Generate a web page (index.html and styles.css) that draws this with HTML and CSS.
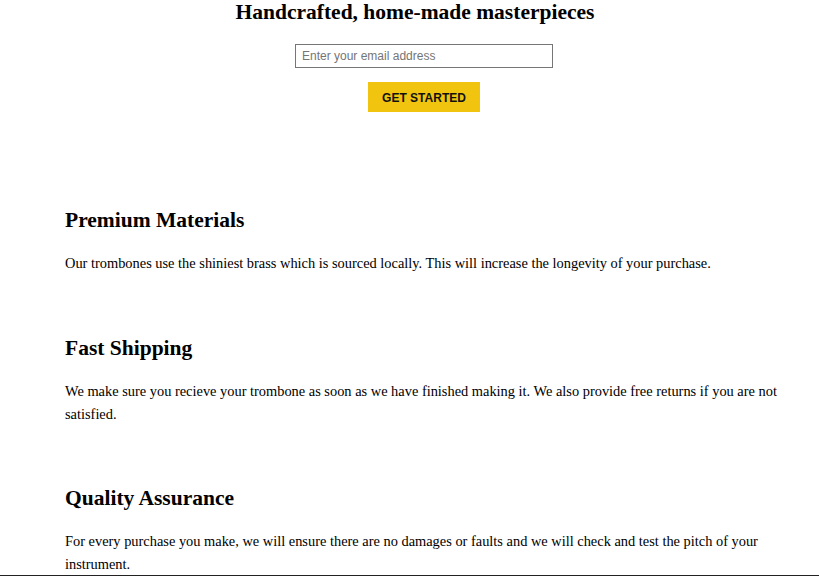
FILE: index.html
```html
<!DOCTYPE html>
<html lang="en">
<head>
<meta charset="utf-8">
<title>Trombones</title>
<link rel="stylesheet" href="styles.css">
</head>
<body>
<section class="hero">
  <h2 class="hero-title">Handcrafted, home-made masterpieces</h2>
  <form class="signup">
    <input class="email" type="email" placeholder="Enter your email address">
    <button class="cta" type="button">GET STARTED</button>
  </form>
</section>
<section class="features">
  <div class="feature">
    <h2 class="feature-title">Premium Materials</h2>
    <p class="feature-text">Our trombones use the shiniest brass which is sourced locally. This will increase the longevity of your purchase.</p>
  </div>
  <div class="feature">
    <h2 class="feature-title">Fast Shipping</h2>
    <p class="feature-text">We make sure you recieve your trombone as soon as we have finished making it. We also provide free returns if you are not satisfied.</p>
  </div>
  <div class="feature">
    <h2 class="feature-title">Quality Assurance</h2>
    <p class="feature-text">For every purchase you make, we will ensure there are no damages or faults and we will check and test the pitch of your instrument.</p>
  </div>
</section>
<div class="edge"></div>
</body>
</html>
```
FILE: styles.css
```css
html, body {
  margin: 0;
  padding: 0;
  background: #fff;
}
body {
  font-family: "Liberation Serif", "Times New Roman", serif;
  color: #000;
}
.hero {
  display: flex;
  flex-direction: column;
  align-items: center;
  padding-left: 11px;
}
.hero-title {
  margin: 0;
  font-size: 21.5px;
  line-height: 24px;
  font-weight: bold;
}
.signup {
  display: flex;
  flex-direction: column;
  align-items: center;
  margin-top: 20px;
  margin-left: 18px;
}
.email {
  width: 258px;
  height: 24px;
  box-sizing: border-box;
  border: 1px solid #767676;
  padding: 1px 6px;
  font-family: "Liberation Sans", Arial, sans-serif;
  font-size: 12px;
  color: #000;
  outline: none;
}
.email::placeholder {
  color: #757575;
}
.cta {
  margin-top: 14px;
  width: 112px;
  height: 30px;
  border: none;
  background: #f1c40f;
  font-family: "Liberation Sans", Arial, sans-serif;
  font-size: 12px;
  font-weight: bold;
  color: #111;
  padding: 2px 0 0;
}
.features {
  display: flex;
  flex-direction: column;
  padding: 0 30px 0 65px;
  margin-top: 93px;
}
.feature-title {
  margin: 0;
  font-size: 21.5px;
  line-height: 30px;
}
.feature-text {
  margin: 17px 0 57.6px;
  font-size: 14.4px;
  line-height: 23px;
}
.edge {
  position: fixed;
  left: 0;
  right: 0;
  bottom: 0;
  height: 1px;
  background: #222;
}
```
